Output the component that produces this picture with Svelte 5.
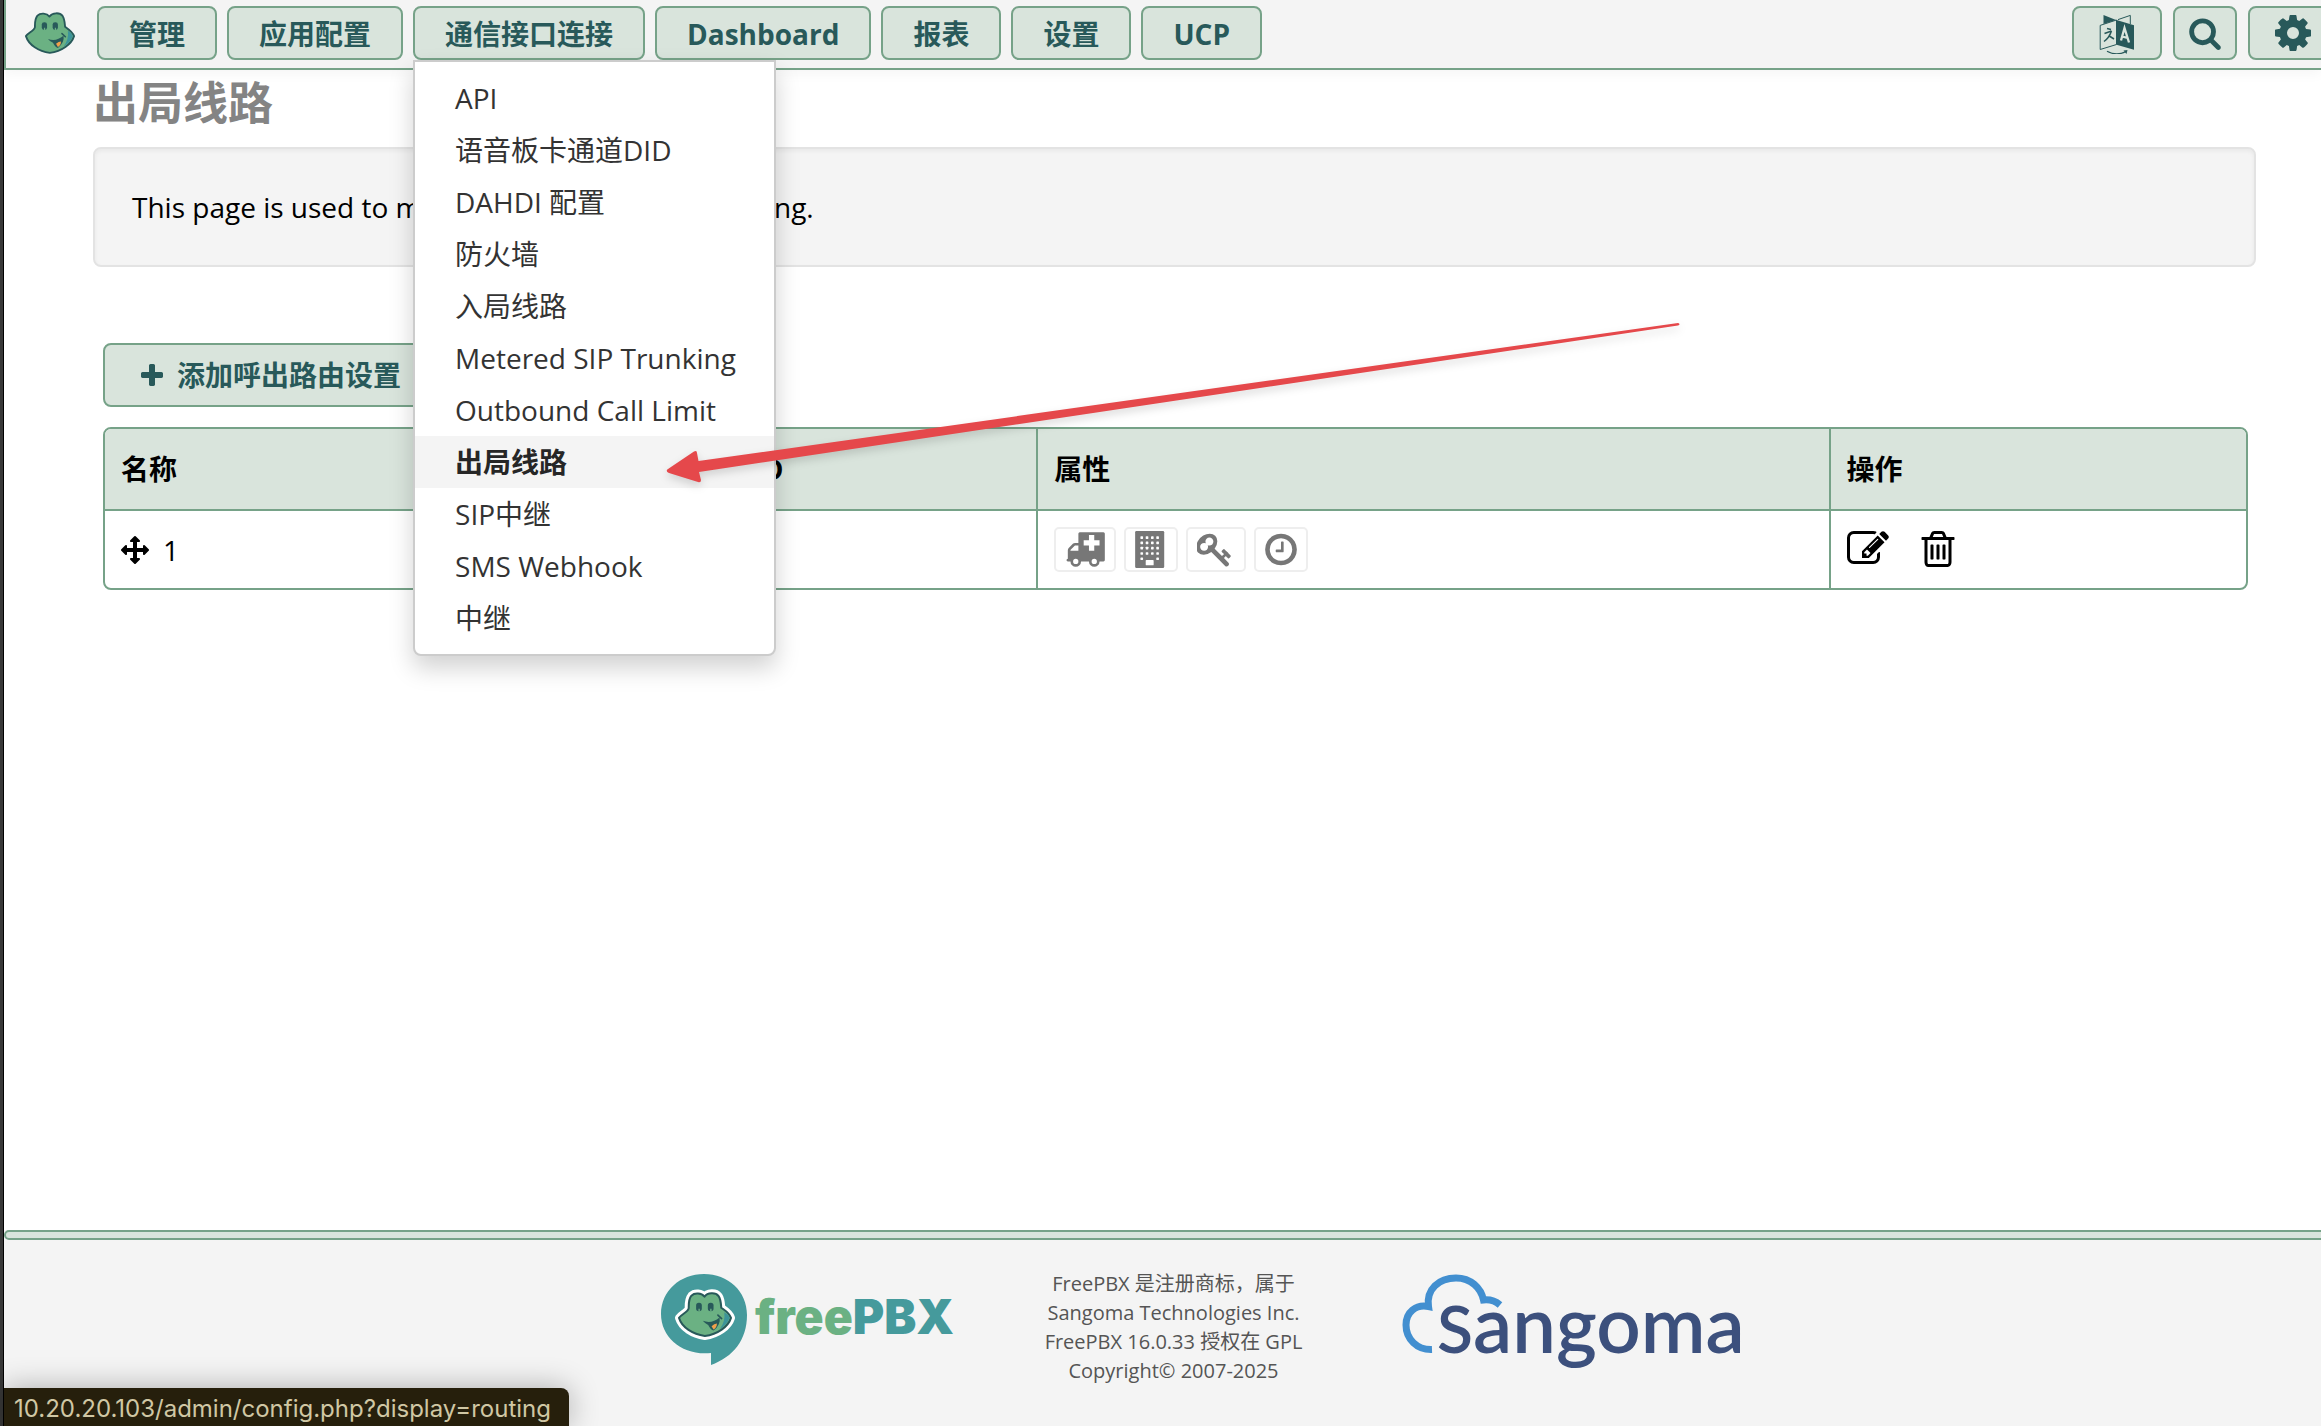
<script lang="ts">
  interface MenuLink {
    label: string;
    active?: boolean;
  }

  interface NavItem {
    label: string;
    links?: MenuLink[];
  }

  const nav: NavItem[] = [
    { label: '管理' },
    { label: '应用配置' },
    {
      label: '通信接口连接',
      links: [
        { label: 'API' },
        { label: '语音板卡通道DID' },
        { label: 'DAHDI 配置' },
        { label: '防火墙' },
        { label: '入局线路' },
        { label: 'Metered SIP Trunking' },
        { label: 'Outbound Call Limit' },
        { label: '出局线路', active: true },
        { label: 'SIP中继' },
        { label: 'SMS Webhook' },
        { label: '中继' },
      ],
    },
    { label: 'Dashboard' },
    { label: '报表' },
    { label: '设置' },
    { label: 'UCP' },
  ];

  const routes = [{ id: 1, name: '1', cid: '' }];

  let openMenu = $state('通信接口连接');

  function toggle(label: string) {
    openMenu = openMenu === label ? '' : label;
  }

  const windowRows = [256, 512, 768, 1024, 1280];
  const windowCols = [256, 512, 768, 1024];
</script>

{#snippet frog()}
  <path d="M3 77C10 66 30 60 32 48C32 34 31 22 40 11C50 1 70 3 79 14C88 1 112 0 121 12C128 22 128 36 129 47C140 55 152 61 158 77C150 103 118 126 80 131C44 126 12 106 3 77Z" fill="#6bb183" stroke="#28595a" stroke-width="6" stroke-linejoin="round" />
  <path d="M138 60Q150 66 154 77Q147 97 124 111Q142 88 138 60Z" fill="#3c949a" />
  <rect x="54" y="32" width="17" height="25" rx="8" fill="#28595a" />
  <rect x="89" y="32" width="17" height="25" rx="8" fill="#28595a" />
  <path d="M63 50v8M98 50v8" stroke="#6bb183" stroke-width="4" />
  <path d="M74 86Q100 96 124 76Q128 98 106 115Q98 113 90 98Q82 96 74 86Z" fill="#28595a" />
  <path d="M100 102Q108 94 116 94Q116 106 106 112Z" fill="#f0a04b" />
  <path d="M119 69l11 10" stroke="#28595a" stroke-width="5" stroke-linecap="round" />
{/snippet}

<div class="window">
  <div class="page">
    <header>
      <a class="brand" href="#home" aria-label="FreePBX">
        <svg width="50" height="42" viewBox="0 0 161 134">{@render frog()}</svg>
      </a>
      <nav>
        {#each nav as item}
          <div class="nav-item">
            <button class="btn" onclick={() => toggle(item.label)}>{item.label}</button>
            {#if item.links && openMenu === item.label}
              <ul class="menu">
                {#each item.links as link}
                  <li><a href="#menu" class:active={link.active}>{link.label}</a></li>
                {/each}
              </ul>
            {/if}
          </div>
        {/each}
      </nav>
      <div class="tools">
        <button class="btn tool" aria-label="Language">
          <svg width="42" height="42" viewBox="0 0 42 42" fill="none" stroke="currentColor">
            <path d="M7.5 3L20 8L7.5 12Z" fill="currentColor" stroke="none" />
            <path d="M22 7.6L34.3 3.4V12" />
            <path d="M4.2 13.4L20.5 8V32.5L4.2 37.5Z" />
            <path d="M20.5 8L38 13.3V37.8L20.5 32.7Z" fill="currentColor" stroke="none" />
            <path d="M11 16.5l4 1M8.5 21.5l7-2.500M15.500 19Q13 26 8 29.500M12.500 23.500l5.500 3.500" stroke-width="1.500" />
            <path d="M25 28.500L28.500 16L33 30.500M26 24.500l5.500 1.300" stroke="#d9e4dc" stroke-width="2.300" />
            <path d="M11 39.200Q20.500 44.500 30 39.500" stroke-width="1.200" />
            <path d="M27.500 38.500L31.500 38L30.500 42Z" fill="currentColor" stroke="none" />
          </svg>
        </button>
        <button class="btn tool search" aria-label="Search">
          <svg width="34" height="34" viewBox="0 0 1792 1792"><path fill="currentColor" d="M1216 832q0-185-131.500-316.500t-316.500-131.500-316.500 131.500-131.500 316.500 131.500 316.500 316.500 131.500 316.500-131.500 131.500-316.500zm512 832q0 52-38 90t-90 38q-54 0-90-38l-343-342q-179 124-399 124-143 0-273.500-55.500t-225-150-150-225-55.500-273.500 55.500-273.500 150-225 225-150 273.500-55.500 273.500 55.500 225 150 150 225 55.500 273.500q0 220-124 399l343 343q37 37 37 90z" /></svg>
        </button>
        <button class="btn tool" aria-label="Settings">
          <svg width="42" height="42" viewBox="0 0 1792 1792"><path fill="currentColor" d="M1152 896q0-106-75-181t-181-75-181 75-75 181 75 181 181 75 181-75 75-181zm512-109v222q0 12-8 23t-20 13l-185 28q-19 54-39 91 35 50 107 138 10 12 10 25t-9 23q-27 37-99 108t-94 71q-12 0-26-9l-138-108q-44 23-91 38-16 136-29 186-7 28-36 28h-222q-14 0-24.500-8.500t-11.500-21.500l-28-184q-49-16-90-37l-141 107q-10 9-25 9-14 0-25-11-126-114-165-168-7-10-7-23 0-12 8-23 15-21 51-66.500t54-70.500q-27-50-41-99l-183-27q-13-2-21-12.500t-8-23.500v-222q0-12 8-23t19-13l186-28q14-46 39-92-40-57-107-138-10-12-10-24 0-10 9-23 26-36 98.500-107.500t94.500-71.500q13 0 26 10l138 107q44-23 91-38 16-136 29-186 7-28 36-28h222q14 0 24.500 8.500t11.500 21.500l28 184q49 16 90 37l142-107q9-9 24-9 13 0 25 10 129 119 165 170 7 8 7 22 0 12-8 23-15 21-51 66.500t-54 70.500q26 50 41 98l183 28q13 2 21 12.500t8 23.500z" /></svg>
        </button>
      </div>
    </header>

    <main>
      <h1>出局线路</h1>
      <div class="well">This page is used to manage your outbound routing.</div>

      <div class="routes">
        <button class="btn add">
          <svg width="22" height="22" viewBox="192 128 1408 1408"><path fill="currentColor" d="M1600 736v192q0 40-28 68t-68 28h-416v416q0 40-28 68t-68 28h-192q-40 0-68-28t-28-68v-416h-416q-40 0-68-28t-28-68v-192q0-40 28-68t68-28h416v-416q0-40 28-68t68-28h192q40 0 68 28t28 68v416h416q40 0 68 28t28 68z" /></svg>
          添加呼出路由设置
        </button>

        <div class="table-wrapper">
          <table>
            <thead>
              <tr>
                <th>名称</th>
                <th>外呼CID</th>
                <th>属性</th>
                <th>操作</th>
              </tr>
            </thead>
            <tbody>
              {#each routes as route (route.id)}
                <tr>
                  <td>
                    <div class="cell name">
                      <svg width="28" height="28" viewBox="0 0 1792 1792"><path fill="currentColor" d="M1792 896q0 26-19 45l-256 256q-19 19-45 19t-45-19-19-45v-128h-384v384h128q26 0 45 19t19 45-19 45l-256 256q-19 19-45 19t-45-19l-256-256q-19-19-19-45t19-45 45-19h128v-384h-384v128q0 26-19 45t-45 19-45-19l-256-256q-19-19-19-45t19-45l256-256q19-19 45-19t45 19 19 45v128h384v-384h-128q-26 0-45-19t-19-45 19-45l256-256q19-19 45-19t45 19l256 256q19 19 19 45t-19 45-45 19h-128v384h384v-128q0-26 19-45t45-19 45 19l256 256q19 19 19 45z" /></svg>
                      {route.name}
                    </div>
                  </td>
                  <td>{route.cid}</td>
                  <td>
                    <div class="cell badges">
                      <span class="badge">
                        <svg width="40" height="37" viewBox="0 -64 1920 1792" fill="currentColor" fill-rule="evenodd">
                          <path d="M1920 64v1280q0 26-19 45t-45 19h-192q0 106-75 181t-181 75-181-75-75-181h-384q0 106-75 181t-181 75-181-75-75-181h-128q-26 0-45-19t-19-45 19-45 45-19v-416q0-26 13-58t32-51l198-198q19-19 51-32t58-13h160v-448q0-26 19-45t45-19h1152q26 0 45 19t19 45zM256 896h384v-256h-158q-14 2-22 9l-195 195q-7 12-9 22zM640 1408a128 128 0 1 0-256 0a128 128 0 1 0 256 0zM1536 1408a128 128 0 1 0-256 0a128 128 0 1 0 256 0zM1152 160v224h-256v256h256v256h256v-256h256v-256h-256v-256h-256z" />
                        </svg>
                      </span>
                      <span class="badge">
                        <svg width="32" height="37" viewBox="0 0 1536 1792">
                          <rect width="1408" height="1792" rx="64" fill="currentColor" />
                          {#each windowRows as y}
                            {#each windowCols as x}
                              <rect {x} {y} width="128" height="128" rx="24" fill="#fff" />
                            {/each}
                          {/each}
                          <rect x="460" y="1250" width="488" height="180" fill="currentColor" />
                          <rect x="512" y="1408" width="384" height="256" rx="32" fill="#fff" />
                        </svg>
                      </span>
                      <span class="badge">
                        <svg width="38" height="37" viewBox="64 0 1792 1792"><path fill="currentColor" d="M832 512q0-80-56-136t-136-56-136 56-56 136q0 42 19 83-41-19-83-19-80 0-136 56t-56 136 56 136 136 56 136-56 56-136q0-42-19-83 41 19 83 19 80 0 136-56t56-136zm851 704q0 17-49 66t-66 49q-9 0-28.500-16t-36.500-33-38.500-40-24.500-26l-96 96 220 220q28 28 28 68 0 42-39 81t-81 39q-40 0-68-28l-671-671q-176 131-365 131-163 0-265.500-102.500t-102.500-265.500q0-160 95-313t248-248 313-95q163 0 265.500 102.500t102.500 265.500q0 189-131 365l355 355 96-96q-3-3-26-24.500t-40-38.500-33-36.500-16-28.500q0-17 49-66t66-49q13 0 23 10 6 6 46 44.500t82 79.500 86.500 86 73 78 28.500 41z" /></svg>
                      </span>
                      <span class="badge">
                        <svg width="32" height="37" viewBox="128 0 1536 1792"><path fill="currentColor" d="M1024 544v448q0 14-9 23t-23 9h-320q-14 0-23-9t-9-23v-64q0-14 9-23t23-9h224v-352q0-14 9-23t23-9h64q14 0 23 9t9 23zm416 352q0-148-73-273t-198-198-273-73-273 73-198 198-73 273 73 273 198 198 273 73 273-73 198-198 73-273zm224 0q0 209-103 385.500t-279.500 279.500-385.500 103-385.500-103-279.500-279.500-103-385.500 103-385.500 279.500-279.500 385.500-103 385.500 103 279.500 279.500 103 385.500z" /></svg>
                      </span>
                    </div>
                  </td>
                  <td>
                    <div class="cell actions">
                      <a href="#edit" aria-label="Edit">
                        <svg width="42" height="42" viewBox="0 0 1792 1792"><path fill="currentColor" d="M888 1184l116-116-152-152-116 116v56h96v96h56zm440-720q-16-16-33 1l-350 350q-17 17-1 33t33-1l350-350q17-17 1-33zm80 594v190q0 119-84.500 203.500t-203.500 84.500h-832q-119 0-203.500-84.500t-84.500-203.500v-832q0-119 84.500-203.500t203.500-84.500h832q63 0 117 25 15 7 18 23 3 17-9 29l-49 49q-14 14-32 8-23-6-45-6h-832q-66 0-113 47t-47 113v832q0 66 47 113t113 47h832q66 0 113-47t47-113v-126q0-13 9-22l64-64q15-15 35-7t20 29zm-96-738l288 288-672 672h-288v-288zm444 132l-92 92-288-288 92-92q28-28 68-28t68 28l152 152q28 28 28 68t-28 68z" /></svg>
                      </a>
                      <a href="#delete" aria-label="Delete">
                        <svg width="42" height="42" viewBox="0 0 1792 1792"><path fill="currentColor" d="M704 736v576q0 14-9 23t-23 9h-64q-14 0-23-9t-9-23v-576q0-14 9-23t23-9h64q14 0 23 9t9 23zm256 0v576q0 14-9 23t-23 9h-64q-14 0-23-9t-9-23v-576q0-14 9-23t23-9h64q14 0 23 9t9 23zm256 0v576q0 14-9 23t-23 9h-64q-14 0-23-9t-9-23v-576q0-14 9-23t23-9h64q14 0 23 9t9 23zm128 724v-948h-896v948q0 22 7 40.500t14.500 27 10.500 8.500h832q3 0 10.500-8.500t14.500-27 7-40.500zm-672-1076h448l-48-117q-7-9-17-11h-317q-10 2-17 11zm928 32v64q0 14-9 23t-23 9h-96v948q0 83-47 143.500t-113 60.500h-832q-66 0-113-58.500t-47-141.500v-952h-96q-14 0-23-9t-9-23v-64q0-14 9-23t23-9h309l70-167q15-37 54-63t79-26h320q40 0 79 26t54 63l70 167h309q14 0 23 9t9 23z" /></svg>
                      </a>
                    </div>
                  </td>
                </tr>
              {/each}
            </tbody>
          </table>
        </div>
      </div>
    </main>

    <footer>
      <div class="action-bar"></div>
      <div class="footer-content">
        <svg class="logo" width="288" height="92" viewBox="0 0 288 92">
          <path d="M43 0C67 0 86 17 86 41C86 66 72 83 50 91V79C22 82 0 64 0 40C0 17 19 0 43 0Z" fill="#459a9c" />
          <svg x="17" y="18" width="54" height="45" viewBox="0 0 161 134" overflow="visible">
            <path d="M3 77C10 66 30 60 32 48C32 34 31 22 40 11C50 1 70 3 79 14C88 1 112 0 121 12C128 22 128 36 129 47C140 55 152 61 158 77C150 103 118 126 80 131C44 126 12 106 3 77Z" fill="#fff" stroke="#fff" stroke-width="24" stroke-linejoin="round" />
            {@render frog()}
          </svg>
          <text class="logo-free" x="94" y="60"><tspan fill="#6bb183">free</tspan><tspan fill="#459a9c">PBX</tspan></text>
        </svg>
        <p>
          FreePBX 是注册商标，属于<br />
          Sangoma Technologies Inc.<br />
          FreePBX 16.0.33 授权在 GPL<br />
          Copyright© 2007-2025
        </p>
        <svg class="logo" width="348" height="100" viewBox="-4 0 348 100">
          <path d="M30 75.500C15 76 4 65 4 51C4 38 14 30 26.500 32.500C24 15 37 4 54 4C69 4 79 14 81.500 26Q91 25 98 31" fill="none" stroke="#428fd0" stroke-width="7" />
          <text class="logo-sangoma" x="35" y="79" fill="#3c507d"><tspan class="initial">S</tspan>angoma</text>
        </svg>
      </div>
    </footer>
  </div>

  <svg class="pointer" width="1020" height="170" viewBox="0 0 1020 170">
    <path d="M7 149L33 131.500Q36 130 36 133L37.500 141L1017 3Q1020 4 1017 5.500L38 152L40 160Q40 163 37 162L8 153Q4 151 7 149Z" fill="#e5484b" />
  </svg>
  <div class="status">10.20.20.103/admin/config.php?display=routing</div>
</div>

<style>
  :global(body) {
    overflow: hidden;
    background: #fff;
  }

  .window {
    --green: #76a288;
    --mint: #d9e4dc;
    --teal: #28595a;
    --panel: #f4f4f4;
    position: relative;
    min-height: 100vh;
    box-sizing: border-box;
    border-left: 3px solid #383838;
    font-family: "Open Sans", "Noto Sans CJK SC", sans-serif;
    font-size: 28px;
    line-height: 40px;
    color: #000;
  }

  .page {
    display: flex;
    flex-direction: column;
    min-height: 100vh;
    border-left: 1px solid #000;
  }

  svg {
    display: block;
    flex: none;
  }

  header {
    display: flex;
    align-items: flex-start;
    padding: 6px 0 8px;
    border-bottom: 2px solid var(--green);
    border-left: 2px solid var(--green);
    background: var(--panel);
    box-shadow: 0 4px 12px rgba(0, 0, 0, 0.04);
  }

  .brand {
    padding: 6px 22px 6px 19px;
  }

  nav {
    display: flex;
    gap: 10px;
  }

  .nav-item {
    position: relative;
  }

  .btn {
    box-sizing: border-box;
    height: 54px;
    padding: 2px 30px 0;
    border: 2px solid var(--green);
    border-radius: 8px;
    background: var(--mint);
    color: var(--teal);
    font-family: inherit;
    font-size: 28px;
    font-weight: 700;
    line-height: 40px;
    white-space: nowrap;
    cursor: pointer;
  }

  .menu {
    position: absolute;
    top: 100%;
    left: 0;
    z-index: 10;
    margin: 0;
    padding: 10px 0;
    border: 2px solid #ccc;
    border-radius: 0 0 8px 8px;
    background: #fff;
    box-shadow: 0 12px 24px rgba(0, 0, 0, 0.18);
    list-style: none;
  }

  .menu a {
    display: block;
    padding: 6px 38px 6px 40px;
    color: #333;
    text-decoration: none;
    white-space: nowrap;
  }

  .menu a.active {
    background: var(--panel);
    color: #262626;
    font-weight: 700;
  }

  .tools {
    display: flex;
    gap: 11px;
    margin-left: auto;
    margin-right: -17px;
  }

  .tool {
    padding: 0 22px;
  }

  .search {
    padding: 0 13px;
  }

  main {
    flex: 1;
    padding: 9px 65px 0 89px;
  }

  h1 {
    margin: 0 0 20px;
    font-size: 45px;
    line-height: 48px;
    color: #848484;
  }

  .well {
    padding: 38px 37px;
    border: 2px solid #e3e3e3;
    border-radius: 8px;
    background: var(--panel);
    box-shadow: inset 0 2px 4px rgba(0, 0, 0, 0.05);
  }

  .routes {
    padding: 76px 8px 0 10px;
  }

  .add {
    display: flex;
    align-items: center;
    gap: 14px;
    height: 64px;
    margin-bottom: 20px;
    padding: 0 36px;
  }

  .table-wrapper {
    overflow: hidden;
    border: 2px solid var(--green);
    border-radius: 8px;
  }

  table {
    width: 100%;
    table-layout: fixed;
    border-collapse: separate;
    border-spacing: 0;
  }

  th,
  td {
    box-sizing: border-box;
    padding: 0 16px;
    text-align: left;
    vertical-align: middle;
  }

  th {
    height: 82px;
    border-bottom: 2px solid var(--green);
    background: var(--mint);
    font-weight: 700;
  }

  td {
    height: 77px;
  }

  th + th,
  td + td {
    border-left: 2px solid var(--green);
  }

  th:nth-child(1) { width: 26%; }
  th:nth-child(3) { width: 37%; }
  th:nth-child(4) { width: 19.5%; }

  .cell {
    display: flex;
    align-items: center;
  }

  .name {
    gap: 14px;
  }

  .badges {
    gap: 8px;
  }

  .badge {
    padding: 2px 9px;
    border: 2px solid #eee;
    border-radius: 5px;
    color: #777;
  }

  .actions {
    gap: 28px;
    padding-bottom: 2px;
  }

  .actions a {
    color: #000;
  }

  footer {
    background: var(--panel);
  }

  .action-bar {
    height: 6px;
    margin-right: -8px;
    border: 2px solid var(--green);
    border-radius: 6px;
    background: var(--mint);
  }

  .footer-content {
    display: flex;
    justify-content: center;
    align-items: flex-start;
    gap: 96px;
    padding: 34px 0 52px 82px;
    height: 100px;
  }

  .footer-content p {
    margin: -5px 0 0;
    color: #555;
    font-size: 20px;
    line-height: 29px;
    text-align: center;
  }

  .logo {
    overflow: visible;
  }

  .logo-free {
    font-family: Inter, sans-serif;
    font-size: 48px;
    font-weight: 900;
  }

  .logo-sangoma {
    font-family: Lato, sans-serif;
    font-size: 78px;
    font-weight: 600;
  }

  .initial {
    font-size: 66px;
  }

  .pointer {
    position: absolute;
    top: 320px;
    left: 658px;
    z-index: 20;
    filter: drop-shadow(0 4px 4px rgba(0, 0, 0, 0.15));
    pointer-events: none;
  }

  .status {
    position: absolute;
    bottom: 0;
    left: 1px;
    padding: 6px 18px 2px 10px;
    border-radius: 0 8px 0 0;
    background: #261f0c;
    box-shadow: 0 0 30px rgba(0, 0, 0, 0.3);
    color: #d0c7a4;
    font-family: Inter, sans-serif;
    font-size: 24px;
    line-height: 30px;
  }
</style>
